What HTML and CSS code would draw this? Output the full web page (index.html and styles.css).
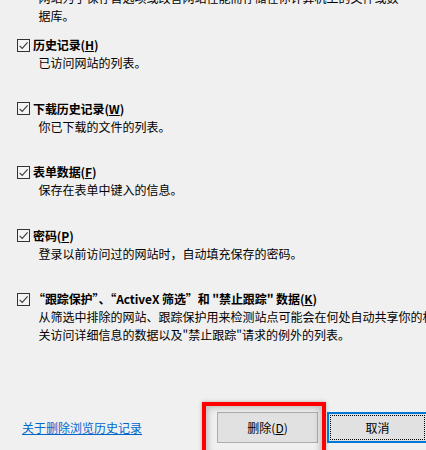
FILE: index.html
```html
<!DOCTYPE html>
<html lang="zh-CN">
<head>
<meta charset="utf-8">
<title>删除浏览历史记录</title>
<link rel="stylesheet" href="styles.css">
</head>
<body>
<div class="dialog">
  <p class="desc intro">网站为了保存首选项或改善网站性能而存储在你计算机上的文件或数<br>据库。</p>

  <div class="item">
    <div class="label"><span class="cb"><svg viewBox="0 0 13 13" width="13" height="13"><path d="M2.6 6.8 L5.2 9.4 L10.6 3.4" fill="none" stroke="#3c3c3c" stroke-width="1.1"/></svg></span><b>历史记录(<u>H</u>)</b></div>
    <p class="desc">已访问网站的列表。</p>
  </div>

  <div class="item">
    <div class="label"><span class="cb"><svg viewBox="0 0 13 13" width="13" height="13"><path d="M2.6 6.8 L5.2 9.4 L10.6 3.4" fill="none" stroke="#3c3c3c" stroke-width="1.1"/></svg></span><b>下载历史记录(<u>W</u>)</b></div>
    <p class="desc">你已下载的文件的列表。</p>
  </div>

  <div class="item">
    <div class="label"><span class="cb"><svg viewBox="0 0 13 13" width="13" height="13"><path d="M2.6 6.8 L5.2 9.4 L10.6 3.4" fill="none" stroke="#3c3c3c" stroke-width="1.1"/></svg></span><b>表单数据(<u>F</u>)</b></div>
    <p class="desc">保存在表单中键入的信息。</p>
  </div>

  <div class="item">
    <div class="label"><span class="cb"><svg viewBox="0 0 13 13" width="13" height="13"><path d="M2.6 6.8 L5.2 9.4 L10.6 3.4" fill="none" stroke="#3c3c3c" stroke-width="1.1"/></svg></span><b>密码(<u>P</u>)</b></div>
    <p class="desc">登录以前访问过的网站时，自动填充保存的密码。</p>
  </div>

  <div class="item">
    <div class="label"><span class="cb"><svg viewBox="0 0 13 13" width="13" height="13"><path d="M2.6 6.8 L5.2 9.4 L10.6 3.4" fill="none" stroke="#3c3c3c" stroke-width="1.1"/></svg></span><b>“跟踪保护”、“ActiveX 筛选”和 "禁止跟踪" 数据(<u>K</u>)</b></div>
    <p class="desc">从筛选中排除的网站、跟踪保护用来检测站点可能会在何处自动共享你的相<br>关访问详细信息的数据以及"禁止跟踪"请求的例外的列表。</p>
  </div>

  <div class="footer">
    <a class="link" href="#">关于删除浏览历史记录</a>
    <div class="buttons">
      <button class="btn btn-delete" type="button">删除(<u>D</u>)<span class="highlight"></span></button>
      <button class="btn btn-cancel" type="button">取消</button>
    </div>
  </div>
</div>
</body>
</html>
```

FILE: styles.css
```css
html, body {
  margin: 0;
  padding: 0;
  background: #f0f0f0;
  overflow: hidden;
  height: 450px;
}

.dialog {
  width: 520px;
  padding-left: 17px;
  font-family: "Microsoft YaHei UI", "Noto Sans CJK SC", "Noto Sans", sans-serif;
  font-size: 12px;
  color: #000;
}

.desc {
  margin: 0;
  padding-left: 21.5px;
  line-height: 18px;
  white-space: nowrap;
}

.intro {
  margin-top: -11px;
  margin-bottom: 11px;
}

.item {
  margin-bottom: 27.5px;
}

.label {
  display: flex;
  align-items: center;
  height: 18px;
  line-height: 18px;
  white-space: nowrap;
}

.label b {
  font-weight: bold;
  letter-spacing: -0.1px;
}

.cb {
  box-sizing: border-box;
  width: 13px;
  height: 13px;
  border: 1px solid #333;
  background: #f4f4f4;
  margin-right: 3px;
  display: flex;
  align-items: center;
  justify-content: center;
  flex: none;
}

.cb svg {
  display: block;
  margin: -1px;
}

.footer {
  display: flex;
  align-items: center;
  margin-top: 68px;
  padding-left: 5px;
  height: 31px;
}

.link {
  color: #0066cc;
  text-decoration: underline;
  white-space: nowrap;
  line-height: 18px;
}

.buttons {
  display: flex;
  gap: 9px;
  margin-left: 75px;
}

.btn {
  position: relative;
  box-sizing: border-box;
  width: 101px;
  height: 31px;
  background: #e1e1e1;
  border: 1px solid #adadad;
  font-family: inherit;
  font-size: 12px;
  color: #000;
  padding: 0;
  margin: 0;
}

.btn-cancel {
  border: 2px solid #0078d7;
  outline: 1px dotted #000;
  outline-offset: -4px;
}

.highlight {
  position: absolute;
  left: -16px;
  top: -11px;
  width: 124px;
  height: 60px;
  border: 4px solid #ff0000;
  box-sizing: border-box;
  box-shadow: inset 0 0 6px 2px rgba(0, 0, 0, 0.22), 0 0 4px rgba(0, 0, 0, 0.25);
  pointer-events: none;
}
```
